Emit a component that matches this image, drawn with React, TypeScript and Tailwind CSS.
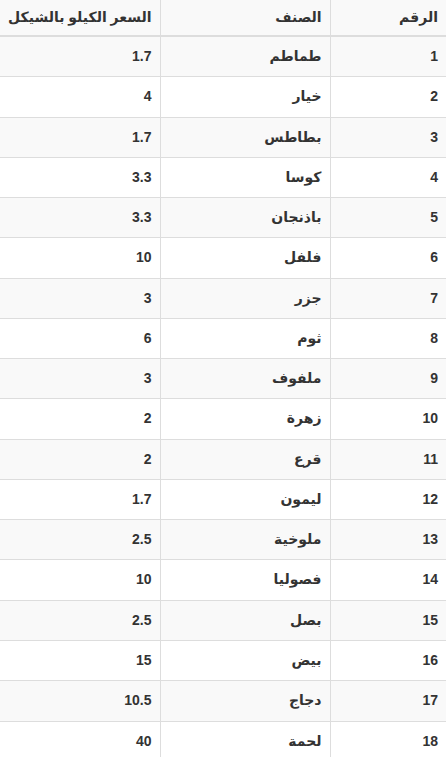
const rows: [number, string, string][] = [
  [1, "طماطم", "1.7"],
  [2, "خيار", "4"],
  [3, "بطاطس", "1.7"],
  [4, "كوسا", "3.3"],
  [5, "باذنجان", "3.3"],
  [6, "فلفل", "10"],
  [7, "جزر", "3"],
  [8, "ثوم", "6"],
  [9, "ملفوف", "3"],
  [10, "زهرة", "2"],
  [11, "قرع", "2"],
  [12, "ليمون", "1.7"],
  [13, "ملوخية", "2.5"],
  [14, "فصوليا", "10"],
  [15, "بصل", "2.5"],
  [16, "بيض", "15"],
  [17, "دجاج", "10.5"],
  [18, "لحمة", "40"],
];

export default function App() {
  return (
    <div
      dir="rtl"
      className="w-[446px] overflow-hidden bg-white text-[14px] font-bold text-[#333]"
      style={{ fontFamily: '"Liberation Sans", Arial, "DejaVu Sans", sans-serif' }}
    >
      <table className="w-[446px] table-fixed border-collapse">
        <colgroup>
          <col className="w-[116px]" />
          <col className="w-[170px]" />
          <col className="w-[160px]" />
        </colgroup>
        <thead>
          <tr className="bg-[#f9f9f9]">
            <th className="border-b-2 border-[#ddd] px-2 py-[8px] text-right leading-[19px] font-bold">الرقم</th>
            <th className="border-b-2 border-x border-[#ddd] px-2 py-[8px] text-right leading-[19px] font-bold">الصنف</th>
            <th className="whitespace-nowrap border-b-2 border-[#ddd] px-2 py-[8px] text-right leading-[19px] font-bold">
              السعر الكيلو بالشيكل
            </th>
          </tr>
        </thead>
        <tbody>
          {rows.map(([n, name, price]) => (
            <tr key={n} className={n % 2 === 1 ? "bg-[#f9f9f9]" : "bg-white"}>
              <td className="border-b border-[#ddd] px-2 py-[10px] leading-[19.27px]">{n}</td>
              <td className="border-b border-x border-[#ddd] px-2 py-[10px] leading-[19.27px]">{name}</td>
              <td className="border-b border-[#ddd] px-2 py-[10px] leading-[19.27px]">{price}</td>
            </tr>
          ))}
        </tbody>
      </table>
    </div>
  );
}
